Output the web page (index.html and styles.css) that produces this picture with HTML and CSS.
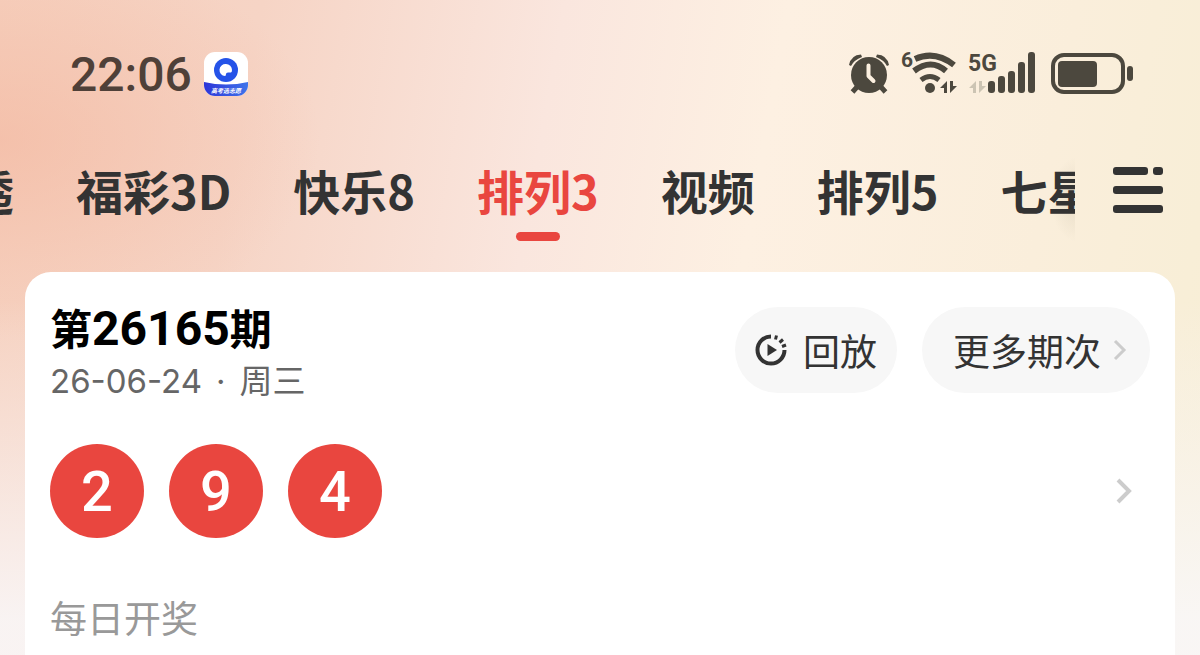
FILE: index.html
```html
<!DOCTYPE html>
<html lang="zh-CN">
<head>
    <meta charset="UTF-8">
    <meta name="viewport" content="width=device-width, initial-scale=1.0">
    <title>排列3 开奖</title>
    <link rel="stylesheet" href="styles.css">
</head>
<body>

    <header class="status-bar">
        <span class="clock">22:06</span>
        <svg class="app-icon" width="44" height="44" viewBox="0 0 44 44">
            <defs>
                <clipPath id="app-shape"><rect width="44" height="44" rx="11"/></clipPath>
                <linearGradient id="app-band">
                    <stop offset="0" stop-color="#2d35d8"/>
                    <stop offset="1" stop-color="#3f74ea"/>
                </linearGradient>
            </defs>
            <g clip-path="url(#app-shape)">
                <rect width="44" height="44" fill="#fff"/>
                <path d="M0 30 Q22 35 44 30 V44 H0 Z" fill="url(#app-band)"/>
                <circle cx="22" cy="18" r="12" fill="#2553e8"/>
                <path d="M22 12 A6 6 0 1 0 21 24 Q22 24 22 22 Q22 20.500 24 20.500 L27 20.500 Q28 20 28 18 A6 6 0 0 0 22 12 Z" fill="#fff"/>
                <text class="app-label" x="22" y="41" text-anchor="middle">高考选志愿</text>
            </g>
        </svg>

        <div class="status-icons">
            <svg width="42" height="44" viewBox="0 0 42 44">
                <circle cx="21" cy="23" r="18" fill="#4c483e"/>
                <path d="M1 13 Q3 3 13 2.500 L14 5 Q6 8 3 14 Z" fill="#4c483e"/>
                <path d="M41 13 Q39 3 29 2.500 L28 5 Q36 8 39 14 Z" fill="#4c483e"/>
                <path d="M9 35 L4.500 40 M33 35 L37.500 40" stroke="#4c483e" stroke-width="5"/>
                <path d="M20.500 13.500 V24 L25.500 29" fill="none" stroke="#fcf0e0" stroke-width="4" stroke-linecap="round" stroke-linejoin="round"/>
            </svg>
            <svg width="56" height="46" viewBox="0 0 56 46">
                <text class="net-label" x="0" y="16" font-size="21">6</text>
                <g fill="none" stroke="#4c483e" stroke-width="6">
                    <path d="M14 8 Q34 -1 53 14"/>
                    <path d="M13 20 Q30 7 45 20"/>
                    <path d="M20 29 Q29 22 38 29" stroke-width="5"/>
                </g>
                <circle cx="29" cy="37" r="5" fill="#4c483e"/>
                <path d="M46 30 V42 H43 V37 H39 Z M49 42 V30 H52 V35 H56 Z" fill="#4c483e"/>
            </svg>
            <svg width="68" height="46" viewBox="0 0 68 46">
                <text class="net-label" x="0" y="20" font-size="23">5G</text>
                <path d="M8 30 V42 H5 V37 H1 Z M11 42 V30 H14 V35 H18 Z" fill="#ccc4b3"/>
                <g fill="#4c483e">
                    <rect x="20" y="30" width="7" height="12" rx="3"/>
                    <rect x="30" y="25" width="7" height="17" rx="3"/>
                    <rect x="40" y="20" width="7" height="22" rx="3"/>
                    <rect x="50" y="11" width="7" height="31" rx="3"/>
                    <rect x="60" y="1" width="7" height="41" rx="3"/>
                </g>
            </svg>
            <svg class="battery" width="82" height="42" viewBox="0 0 82 42">
                <rect x="2" y="2" width="70" height="37" rx="11" fill="none" stroke="#4c483e" stroke-width="4"/>
                <rect x="7" y="8" width="39" height="26" rx="4" fill="#4c483e"/>
                <rect x="76" y="13" width="6" height="15" rx="3" fill="#4c483e"/>
            </svg>
        </div>
    </header>

    <nav class="tab-bar">
        <div class="tabs">
            <a class="tab" href="#">大乐透</a>
            <a class="tab" href="#">福彩3D</a>
            <a class="tab" href="#">快乐8</a>
            <a class="tab active" href="#">排列3</a>
            <a class="tab" href="#">视频</a>
            <a class="tab" href="#">排列5</a>
            <a class="tab" href="#">七星彩</a>
        </div>
        <button type="button" class="menu-button" aria-label="全部彩种">
            <svg width="52" height="46" viewBox="0 0 52 46" fill="#333">
                <rect x="1" y="0" width="35" height="8" rx="3"/>
                <rect x="41" y="0" width="10" height="8" rx="3"/>
                <rect x="1" y="19" width="50" height="8" rx="3"/>
                <rect x="1" y="38" width="50" height="8" rx="3"/>
            </svg>
        </button>
    </nav>

    <main class="card">
        <div class="card-header">
            <div class="issue">
                <h1>第<span class="issue-number">26165</span>期</h1>
                <p class="date"><span>26-06-24</span><span>·</span><span>周三</span></p>
            </div>
            <button type="button" class="pill">
                <svg width="32" height="32" viewBox="0 0 32 32">
                    <path d="M16 2.500 A13.500 13.500 0 1 0 29.500 16" fill="none" stroke="#333" stroke-width="4"/>
                    <path d="M20.500 5.500 L21.500 1.500 M24.500 8.500 L28 5.500 M27 12.500 L31 11" stroke="#333" stroke-width="3"/>
                    <path d="M12.500 10 L22 16 L12.500 22 Z" fill="#333"/>
                </svg>
                回放
            </button>
            <button type="button" class="pill pill-more">
                更多期次
                <svg width="14" height="22" viewBox="0 0 14 22">
                    <path d="M2 2 L11 11 L2 20" fill="none" stroke="#ccc" stroke-width="3"/>
                </svg>
            </button>
        </div>

        <a class="result" href="#" aria-label="开奖详情">
            <span class="ball">2</span>
            <span class="ball">9</span>
            <span class="ball">4</span>
            <svg class="result-arrow" width="18" height="28" viewBox="0 0 18 28">
                <path d="M3 3 L14 14 L3 25" fill="none" stroke="#ccc" stroke-width="4"/>
            </svg>
        </a>

        <p class="schedule">每日开奖</p>
    </main>

</body>
</html>
```
FILE: styles.css
```css
* {
    box-sizing: border-box;
}
body {
    margin: 0;
    min-height: 100vh;
    display: flex;
    flex-direction: column;
    font-family: "Noto Sans CJK SC", sans-serif;
    color: #333;
    background:
        linear-gradient(to bottom, rgba(249, 247, 248, 0) 300px, rgba(249, 247, 248, 0.9) 620px),
        radial-gradient(ellipse 320px 200px at 0 140px, rgba(243, 182, 158, 0.6), rgba(243, 182, 158, 0)),
        linear-gradient(100deg, #f6d0be 0%, #f6d4c5 20%, #fae6de 43%, #fdf0e2 60%, #faeedb 82%, #f7eed5 100%);
}
h1,
p {
    margin: 0;
}
a {
    color: inherit;
    text-decoration: none;
}
button {
    border: none;
    padding: 0;
    background: none;
    color: inherit;
    font: inherit;
    cursor: pointer;
}
svg {
    display: block;
    flex-shrink: 0;
    overflow: visible;
}

/* status bar */
.status-bar {
    display: flex;
    align-items: center;
    height: 148px;
    padding: 0 67px 0 70px;
}
.clock {
    font-family: Roboto, sans-serif;
    font-size: 48px;
    font-weight: 500;
    color: #4f4038;
}
.app-icon {
    margin-left: 12px;
}
.app-label {
    font-size: 6px;
    font-weight: 700;
    font-style: italic;
    fill: #fff;
}
.status-icons {
    display: flex;
    align-items: center;
    gap: 11px;
    margin-left: auto;
}
.net-label {
    font-family: Roboto, sans-serif;
    font-weight: 700;
    fill: #4c483e;
}
.battery {
    margin-left: 4px;
}

/* lottery tabs */
.tab-bar {
    display: flex;
    align-items: flex-start;
    padding: 10px 36px 31px 0;
}
.tabs {
    flex: 1;
    min-width: 0;
    display: flex;
    gap: 62px;
    overflow: hidden;
    height: 83px;
    background: radial-gradient(ellipse 24px 42px at 100% 50%, rgba(110, 100, 70, 0.12), rgba(110, 100, 70, 0));
}
.tab {
    flex-shrink: 0;
    font-size: 47px;
    font-weight: 700;
    line-height: 64px;
}
/* the list starts scrolled */
.tab:first-child {
    margin-left: -127px;
}
.tab.active {
    color: #e9463f;
}
.tab.active::after {
    content: "";
    display: block;
    width: 44px;
    height: 9px;
    margin: 10px auto 0;
    border-radius: 5px;
    background-color: #e9463f;
}
.menu-button {
    display: flex;
    align-items: center;
    height: 64px;
    margin-left: 37px;
}

/* result card */
.card {
    flex: 1;
    margin: 0 25px;
    padding: 35px 25px 12px;
    border-radius: 26px 26px 0 0;
    background-color: #fff;
}
.card-header {
    display: flex;
    align-items: flex-start;
    gap: 25px;
}
.issue {
    flex: 1;
}
.issue h1 {
    font-size: 42px;
    font-weight: 700;
    line-height: 40px;
    color: #000;
}
.issue-number {
    font-family: Roboto, sans-serif;
    font-size: 48px;
    line-height: 1px;
}
.date {
    display: flex;
    gap: 14px;
    margin-top: 12px;
    font-family: Inter, "Noto Sans CJK SC", sans-serif;
    font-size: 33px;
    line-height: 44px;
    color: #666;
}
.pill {
    display: flex;
    align-items: center;
    gap: 16px;
    height: 86px;
    padding: 0 20px;
    border-radius: 43px;
    background-color: #f7f7f7;
    font-size: 37px;
}
.pill-more {
    gap: 12px;
    padding: 0 23px 0 31px;
}
.result {
    display: flex;
    align-items: center;
    gap: 25px;
    margin-top: 41px;
    padding-right: 17px;
}
.ball {
    width: 94px;
    height: 94px;
    border-radius: 50%;
    background-color: #e9463f;
    color: #fff;
    font-family: Roboto, sans-serif;
    font-size: 56px;
    font-weight: 500;
    line-height: 96px;
    text-align: center;
}
.result-arrow {
    margin-left: auto;
}
.schedule {
    margin-top: 57px;
    font-size: 37px;
    line-height: 44px;
    color: #999;
}
```
